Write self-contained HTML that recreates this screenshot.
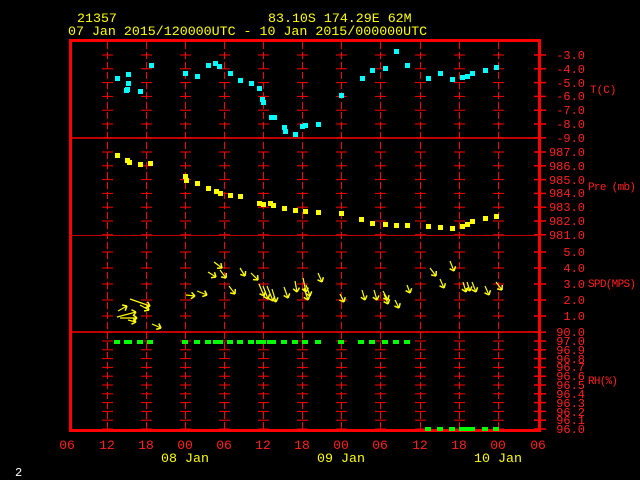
<!DOCTYPE html>
<html><head><meta charset="utf-8"><style>
html,body{margin:0;padding:0;background:#000;width:640px;height:480px;overflow:hidden}
svg{display:block}
text{font-family:"Liberation Mono",monospace}
.y{fill:#ffff00;font-size:13.3px}
.r{fill:#ff2020;font-size:12px}
</style></head><body>
<svg id="s" width="640" height="480" viewBox="0 0 640 480">
<text class="y" x="77" y="22">21357</text>
<text class="y" x="268" y="22">83.10S  174.29E   62M</text>
<text class="y" x="68" y="35">07 Jan 2015/120000UTC - 10 Jan 2015/000000UTC</text>
<g id="grid" stroke="#ff0000" stroke-width="1"></g>
<rect x="70.5" y="40.5" width="469" height="390" fill="none" stroke="#ff0000" stroke-width="3"/>
<line x1="70" y1="138" x2="540" y2="138" stroke="#ff0000" stroke-width="1.5"/>
<line x1="70" y1="235.5" x2="540" y2="235.5" stroke="#c00000" stroke-width="1"/>
<line x1="70" y1="332" x2="540" y2="332" stroke="#ff0000" stroke-width="1.5"/>
<g class="r" text-anchor="end">
<text x="585" y="59">-3.0</text><text x="585" y="73">-4.0</text><text x="585" y="87">-5.0</text><text x="585" y="100">-6.0</text><text x="585" y="114">-7.0</text><text x="585" y="128">-8.0</text><text x="585" y="142">-9.0</text>
<text x="585" y="156">987.0</text><text x="585" y="170">986.0</text><text x="585" y="184">985.0</text><text x="585" y="197">984.0</text><text x="585" y="211">983.0</text><text x="585" y="225">982.0</text><text x="585" y="239">981.0</text>
<text x="585" y="256">5.0</text><text x="585" y="272">4.0</text><text x="585" y="288">3.0</text><text x="585" y="304">2.0</text><text x="585" y="320">1.0</text>
<text x="585" y="336">90.0</text><text x="585" y="345">97.0</text><text x="585" y="354">96.9</text><text x="585" y="363">96.8</text><text x="585" y="371">96.7</text><text x="585" y="380">96.6</text><text x="585" y="389">96.5</text><text x="585" y="398">96.4</text><text x="585" y="407">96.3</text><text x="585" y="416">96.2</text><text x="585" y="424">96.1</text><text x="585" y="433">96.0</text>
</g>
<g class="r" style="font-size:11px">
<text x="590" y="93">T(C)</text><text x="588" y="190" textLength="48">Pre (mb)</text><text x="588" y="287" textLength="48">SPD(MPS)</text><text x="588" y="384" textLength="30">RH(%)</text>
</g>
<g class="r" style="font-size:13px" text-anchor="middle">
<text x="67" y="449">06</text><text x="107" y="449">12</text><text x="146" y="449">18</text><text x="185" y="449">00</text><text x="224" y="449">06</text><text x="263" y="449">12</text><text x="302" y="449">18</text><text x="341" y="449">00</text><text x="380" y="449">06</text><text x="420" y="449">12</text><text x="459" y="449">18</text><text x="498" y="449">00</text><text x="538" y="449">06</text>
</g>
<g class="y" text-anchor="middle"><text x="185" y="462">08 Jan</text><text x="341" y="462">09 Jan</text><text x="498" y="462">10 Jan</text></g>
<text x="15" y="476" fill="#fff" style="font-size:12px">2</text>
<g id="data"></g>
</svg>
<script>
var NS="http://www.w3.org/2000/svg",g=document.getElementById('grid'),d=document.getElementById('data');
function el(p,t,a){var e=document.createElementNS(NS,t);for(var k in a)e.setAttribute(k,a[k]);p.appendChild(e);return e;}
var xs=[107,146,185,224,263,302,341,380,420,459,498];
var ys=[];
for(var i=0;i<7;i++)ys.push(55+i*13.8);
for(var i=0;i<7;i++)ys.push(152+i*13.8);
for(var i=0;i<5;i++)ys.push(252+i*16);
for(var i=0;i<12;i++)ys.push(341+i*8.8-8.8);
xs.forEach(function(x){
 el(g,'line',{x1:x+.5,y1:42,x2:x+.5,y2:429,'stroke-dasharray':'7,3'});
 ys.forEach(function(y){el(g,'line',{x1:x-5,y1:y,x2:x+6,y2:y});});
});
ys.forEach(function(y){el(g,'line',{x1:534,y1:y,x2:546,y2:y,'stroke-width':1.5});});
var T=[[117,78],[128,74],[128,83],[126,90],[127,89],[140,91],[151,65],[185,73],[197,76],[208,65],[215,63],[219,66],[230,73],[240,80],[251,83],[259,88],[262,99],[263,102],[271,117],[274,117],[284,127],[285,131],[295,134],[302,126],[305,125],[318,124],[341,95],[362,78],[372,70],[385,68],[396,51],[407,65],[428,78],[440,73],[452,79],[462,77],[467,76],[472,73],[485,70],[496,67]];
T.forEach(function(p){el(d,'rect',{x:p[0]-2,y:p[1]-2,width:5,height:5,fill:'#00ffff'});});
var P=[[117,155],[127,160],[129,162],[140,164],[150,163],[185,176],[186,180],[197,183],[208,188],[216,191],[220,193],[230,195],[240,196],[259,203],[263,204],[270,203],[273,205],[284,208],[295,210],[305,211],[318,212],[341,213],[361,219],[372,223],[385,224],[396,225],[407,225],[428,226],[440,227],[452,228],[462,226],[467,224],[472,221],[485,218],[496,216]];
P.forEach(function(p){el(d,'rect',{x:p[0]-2,y:p[1]-2,width:5,height:5,fill:'#ffff00'});});
var G=[117,127,129,140,150,185,197,208,216,220,230,240,251,259,263,270,273,284,295,305,318,341,361,372,385,396,407];
G.forEach(function(x){el(d,'rect',{x:x-3,y:340,width:6,height:4,fill:'#00ff00'});});
[428,440,452,462,467,472,485,496].forEach(function(x){el(d,'rect',{x:x-3,y:427,width:6,height:4,fill:'#00ff00'});});
var A=[[130,299,150,306],[118,311,127,306],[117,317,136,312],[120,318,137,318],[128,320,136,322],[140,305,149,310],[152,324,161,328],[186,295,195,296],[197,291,207,295],[214,262,222,268],[208,272,216,277],[220,270,226,278],[240,268,245,276],[229,286,235,294],[251,273,258,280],[259,284,264,296],[263,286,268,299],[267,286,273,301],[272,289,276,302],[284,287,288,298],[295,281,297,292],[303,278,306,292],[306,285,310,296],[304,288,308,300],[318,273,322,282],[340,294,344,302],[362,290,365,300],[374,290,377,300],[383,291,388,300],[384,294,388,304],[395,300,399,308],[407,285,410,293],[430,268,436,276],[440,279,444,288],[450,261,454,271],[463,282,466,292],[467,282,470,291],[472,282,476,292],[485,286,489,295],[496,282,502,290]];
A.forEach(function(a){
 var x1=a[0],y1=a[1],x2=a[2],y2=a[3];
 el(d,'line',{x1:x1,y1:y1,x2:x2,y2:y2,stroke:'#ffff00','stroke-width':1.2});
 var ang=Math.atan2(y2-y1,x2-x1),h=5;
 [0.5,-0.5].forEach(function(o){el(d,'line',{x1:x2,y1:y2,x2:x2-h*Math.cos(ang+o*1.4),y2:y2-h*Math.sin(ang+o*1.4),stroke:'#ffff00','stroke-width':1.5});});
});
</script>
</body></html>
